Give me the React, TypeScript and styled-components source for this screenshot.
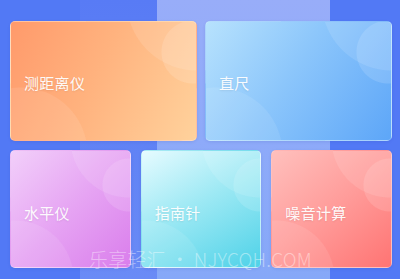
import React from "react";
import styled, { createGlobalStyle } from "styled-components";

const GlobalStyle = createGlobalStyle`
  html, body {
    margin: 0;
    padding: 0;
  }
  body {
    width: 400px;
    height: 279px;
    overflow: hidden;
    font-family: "Noto Sans CJK SC", "Noto Sans", sans-serif;
  }
`;

// the blurred stripes behind the cards
const Page = styled.div`
  position: relative;
  width: 400px;
  height: 279px;
  box-sizing: border-box;
  padding: 21px 8px 0 10px;
  display: flex;
  flex-direction: column;
  gap: 9px;
  background:
    linear-gradient(180deg, #587bf5 0%, #5f81f5 45%, #6a8bf6 100%) 80px 0 / 77px 100% no-repeat,
    linear-gradient(180deg, #98adf9 0%, #8eaaf9 50%, #86a8f8 100%) 157px 0 / 173px 100% no-repeat,
    #5279f5;
`;

const Row = styled.div<{ $cols: number; $height: number; $gap: number }>`
  display: grid;
  grid-template-columns: repeat(${(p) => p.$cols}, 1fr);
  gap: ${(p) => p.$gap}px;
  height: ${(p) => p.$height}px;
`;

type Tone = "orange" | "blue" | "purple" | "cyan" | "pink";

const tones: Record<Tone, string> = {
  orange: "linear-gradient(115deg, #ff9a6b 0%, #ffb27e 45%, #ffd29c 100%)",
  blue: "linear-gradient(125deg, #b7e2fd 0%, #8cc6fb 45%, #5da6f8 100%)",
  purple: "linear-gradient(135deg, #f2cffa 0%, #e6a4f3 50%, #da7eec 100%)",
  cyan: "linear-gradient(150deg, #e6fbff 0%, #9ee9f4 45%, #4fd2e8 100%)",
  pink: "linear-gradient(140deg, #ffc0bd 0%, #ff9c9a 50%, #ff7473 100%)",
};

const Card = styled.div<{ $tone: Tone; $big?: boolean }>`
  box-sizing: border-box;
  border-radius: 5px;
  border: 1px solid rgba(255, 255, 255, 0.22);
  display: flex;
  align-items: center;
  padding: ${(p) => (p.$big ? "3px 0 0 13px" : "6px 0 0 13px")};
  background:
    ${(p) =>
      p.$big
        ? `radial-gradient(circle at 182px 30px, rgba(255,255,255,0.13) 0 31px, transparent 32px),
           radial-gradient(circle at 186px -22px, rgba(255,255,255,0.11) 0 70px, transparent 71px),
           radial-gradient(circle at 10px 132px, rgba(255,255,255,0.09) 0 66px, transparent 67px),`
        : `radial-gradient(circle at 118px 34px, rgba(255,255,255,0.13) 0 26px, transparent 27px),
           radial-gradient(circle at 118px -12px, rgba(255,255,255,0.11) 0 58px, transparent 59px),
           radial-gradient(circle at 4px 128px, rgba(255,255,255,0.09) 0 58px, transparent 59px),`}
    ${(p) => tones[p.$tone]};
  box-shadow: 0 1px 3px rgba(40, 60, 160, 0.12);
`;

const Label = styled.span`
  color: rgba(255, 255, 255, 0.95);
  font-size: 15px;
  letter-spacing: 0.3px;
  text-shadow: 0 1px 2px rgba(0, 0, 0, 0.08);
`;

const Watermark = styled.div`
  position: absolute;
  left: 89px;
  top: 245px;
  font-family: "Noto Sans CJK SC", "Noto Sans", sans-serif;
  font-size: 19px;
  font-weight: 300;
  color: rgba(255, 255, 255, 0.42);
  white-space: nowrap;
  letter-spacing: 0.2px;
`;

const top: { name: string; tone: Tone }[] = [
  { name: "测距离仪", tone: "orange" },
  { name: "直尺", tone: "blue" },
];

const bottom: { name: string; tone: Tone }[] = [
  { name: "水平仪", tone: "purple" },
  { name: "指南针", tone: "cyan" },
  { name: "噪音计算", tone: "pink" },
];

export default function App() {
  return (
    <>
      <GlobalStyle />
      <Page>
        <Row $cols={2} $height={120} $gap={8}>
          {top.map((t) => (
            <Card key={t.name} $tone={t.tone} $big>
              <Label>{t.name}</Label>
            </Card>
          ))}
        </Row>
        <Row $cols={3} $height={118} $gap={10}>
          {bottom.map((t) => (
            <Card key={t.name} $tone={t.tone}>
              <Label>{t.name}</Label>
            </Card>
          ))}
        </Row>
        <Watermark>乐享轻汇 • NJYCQH.COM</Watermark>
      </Page>
    </>
  );
}
